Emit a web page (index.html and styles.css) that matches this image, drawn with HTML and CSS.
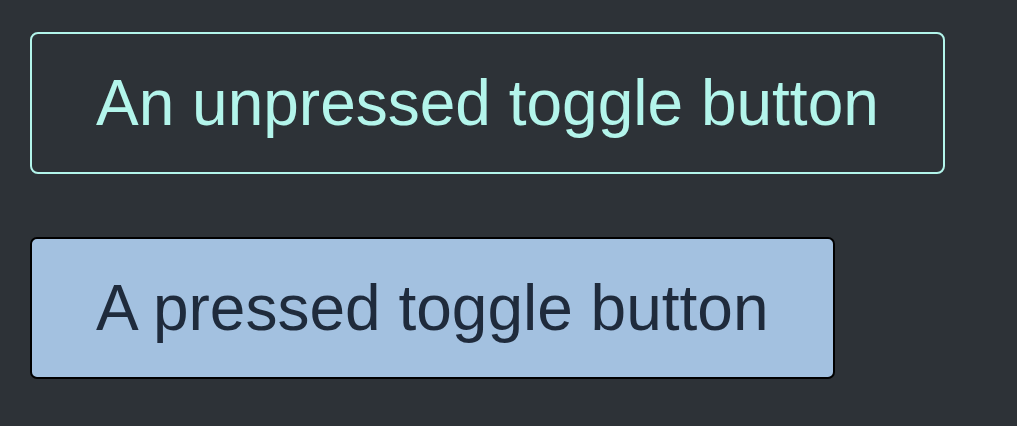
FILE: index.html
```html
<!DOCTYPE html>
<html lang="en">
  <head>
    <meta charset="UTF-8" />
    <meta name="viewport" content="width=device-width, initial-scale=1.0" />
    <title>Toggle buttons</title>
    <link rel="stylesheet" href="styles.css">
  </head>
  <body>
    <div class="toggles">
      <button class="toggle" aria-pressed="false">An unpressed toggle button</button>
      <button class="toggle pressed" aria-pressed="true">A pressed toggle button</button>
    </div>
  </body>
</html>
```

FILE: styles.css
```css
html,
body {
  margin: 0;
  height: 100%;
}

body {
  background-color: #2d3237;
  font-family: 'Liberation Sans', Arial, sans-serif;
}

.toggles {
  display: flex;
  flex-direction: column;
  align-items: flex-start;
  gap: 63px;
  padding: 32px 30px;
}

.toggle {
  font-family: inherit;
  font-size: 64px;
  line-height: normal;
  padding: 32px 64px;
  border-radius: 8px;
  background-color: transparent;
  color: #b3f5eb;
  border: 2px solid #b3f5eb;
  cursor: pointer;
}

.toggle.pressed {
  background-color: #a3c1e0;
  color: #1f2b3c;
  border: 2px solid #000;
  border-radius: 7px;
}
```
